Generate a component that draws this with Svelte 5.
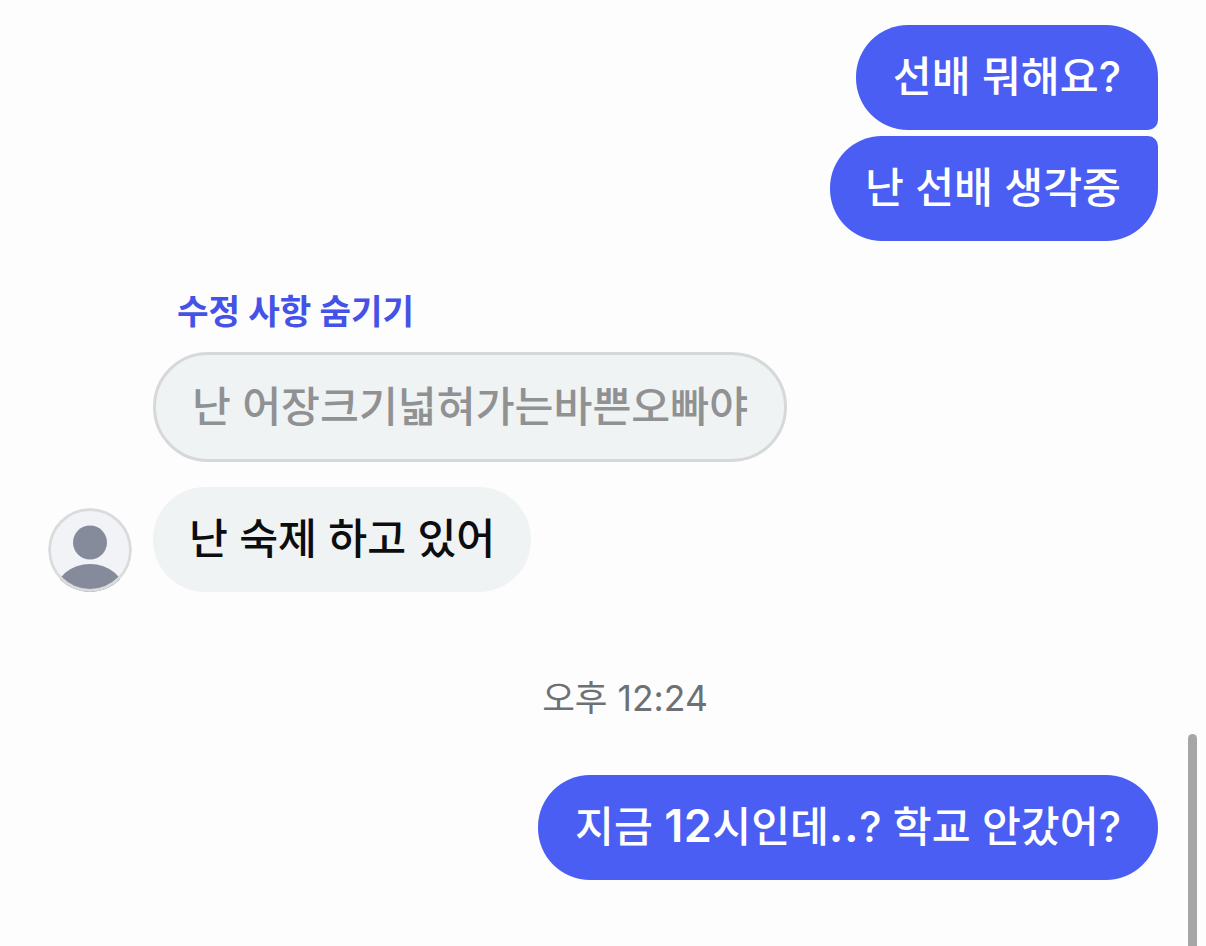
<script>
  const avatarColor = '#868b9b';
</script>

<main class="chat">
  <section class="group outgoing">
    <div class="bubble mine first">선배 뭐해요?</div>
    <div class="bubble mine last">난 선배 생각중</div>
  </section>

  <section class="group incoming">
    <button class="toggle">수정 사항 숨기기</button>
    <div class="bubble edited">난 어장크기넓혀가는바쁜오빠야</div>
    <div class="row">
      <div class="avatar">
        <svg viewBox="0 0 84 84" width="84" height="84" aria-hidden="true">
          <circle cx="42" cy="42" r="41" fill="#f1f3f6" />
          <circle cx="42" cy="34.500" r="17" fill={avatarColor} />
          <ellipse cx="42" cy="86" rx="35" ry="30" fill={avatarColor} />
          <circle cx="42" cy="42" r="40.500" fill="none" stroke="#d9dbdc" stroke-width="3" />
        </svg>
      </div>
      <div class="bubble theirs">난 숙제 하고 있어</div>
    </div>
  </section>

  <div class="time">오후 12:24</div>

  <section class="group outgoing">
    <div class="bubble mine wide">
      <span>지금 <b class="num">12</b>시인데<b class="dots">..</b>? 학교 안갔어?</span>
    </div>
  </section>

  <div class="scrollbar"></div>
</main>

<style>
  :global(body) {
    margin: 0;
    background: #fdfdfd;
  }

  .chat {
    position: relative;
    width: 1206px;
    height: 946px;
    overflow: hidden;
    box-sizing: border-box;
    padding-top: 25px;
    font-family: Inter, "Noto Sans CJK KR", sans-serif;
    font-size: 42.3px;
    font-weight: 500;
  }

  .group {
    display: flex;
    flex-direction: column;
  }

  .outgoing {
    align-items: flex-end;
    gap: 6px;
    padding-right: 48px;
  }

  .bubble {
    box-sizing: border-box;
    height: 105px;
    display: flex;
    align-items: center;
    border-radius: 52px;
    padding-bottom: 8px;
    white-space: nowrap;
  }

  .mine {
    background: #4a5ef4;
    color: #fff;
    padding-left: 37px;
    padding-right: 37px;
  }

  .wide {
    padding-left: 37px;
  }

  .num {
    font-size: 45px;
    font-weight: 600;
    letter-spacing: 0.500px;
  }

  .dots {
    font-weight: 700;
    letter-spacing: 1px;
  }

  .first {
    border-bottom-right-radius: 10px;
  }

  .last {
    border-top-right-radius: 10px;
    padding-left: 35px;
  }

  .incoming {
    align-items: flex-start;
    margin-top: 46px;
    padding-left: 48px;
  }

  .toggle {
    margin: 2px 0 17px 129px;
    padding: 0;
    border: 0;
    background: none;
    color: #4552e8;
    font: inherit;
    font-size: 34.3px;
    font-weight: 700;
    line-height: 46px;
  }

  .edited {
    height: 110px;
    margin-left: 105px;
    padding-left: 36px;
    padding-right: 36px;
    background: #f0f3f4;
    border: 3px solid #d6d8d9;
    border-radius: 55px;
    color: #909193;
  }

  .row {
    display: flex;
    align-items: flex-end;
    gap: 21px;
    margin-top: 25px;
  }

  .avatar {
    width: 84px;
    height: 84px;
    border-radius: 50%;
    overflow: hidden;
  }

  .avatar svg {
    display: block;
  }

  .theirs {
    padding-left: 36px;
    padding-right: 36px;
    background: #f0f3f4;
    color: #0c0d0e;
  }

  .time {
    margin: 84px 0 53px;
    padding-left: 44px;
    text-align: center;
    color: #6d7075;
    font-size: 35.500px;
    font-weight: 400;
    line-height: 46px;
  }

  .scrollbar {
    position: absolute;
    top: 734px;
    bottom: -20px;
    left: 1188px;
    width: 9px;
    border-radius: 5px;
    background: #a6a6a6;
  }
</style>
